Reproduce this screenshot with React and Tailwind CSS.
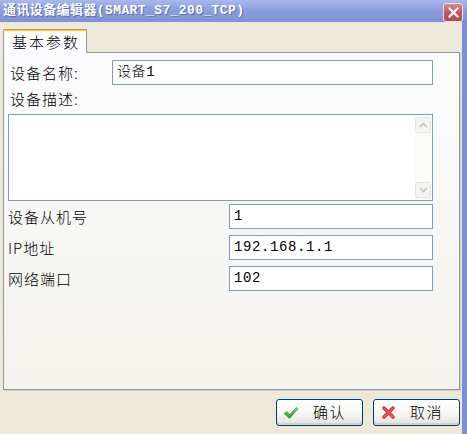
import React from "react";

const CJK = { fontFamily: '"Noto Sans CJK SC", "Noto Sans", sans-serif' };
const MONO = { fontFamily: '"Liberation Mono", "Noto Sans CJK SC", monospace' };

function Field({ value, className = "" }) {
  return (
    <div
      className={`h-[25px] border border-[#7f9db9] bg-white flex items-center pl-[4px] text-[14px] font-light tracking-[0.6px] text-black ${className}`}
      style={MONO}
    >
      {value}
    </div>
  );
}

function Label({ children, className = "" }) {
  return (
    <div className={`text-[15px] font-light tracking-[1px] text-black leading-[20px] ${className}`} style={CJK}>
      {children}
    </div>
  );
}

function Chevron({ up }) {
  return (
    <svg width="9" height="6" viewBox="0 0 9 6">
      <path
        d={up ? "M1 5 L4.5 1.5 L8 5" : "M1 1 L4.5 4.5 L8 1"}
        fill="none"
        stroke="#c4c4c4"
        strokeWidth="1.6"
      />
    </svg>
  );
}

function Btn({ icon, label }) {
  return (
    <div className="w-[87px] h-[27px] rounded-[3px] border border-[#003c74] bg-gradient-to-b from-[#ffffff] via-[#f7f7f4] to-[#e3e2da] flex items-center shadow-[inset_0_-2px_0_#d6d0c5]">
      <div className="ml-[6px] w-[16px] h-[16px] flex items-center justify-center">{icon}</div>
      <div className="ml-[14px] text-[15px] font-light tracking-[1.5px] text-black" style={CJK}>
        {label}
      </div>
    </div>
  );
}

const CheckIcon = (
  <svg width="16" height="14" viewBox="0 0 16 14">
    <defs>
      <linearGradient id="gck" x1="0" y1="0" x2="0" y2="1">
        <stop offset="0" stopColor="#8ad27a" />
        <stop offset="1" stopColor="#2f8f2f" />
      </linearGradient>
    </defs>
    <path d="M1 7.5 L4 5.5 L6.5 8.5 L13.5 1.5 L15 3 L6.5 12.5 Z" fill="url(#gck)" stroke="#3c8a3c" strokeWidth="0.6" />
  </svg>
);

const CrossIcon = (
  <svg width="15" height="15" viewBox="0 0 15 15">
    <path d="M3 3 L12 12 M12 3 L3 12" stroke="#d63a3a" strokeWidth="3.6" strokeLinecap="round" />
    <path d="M3 3 L12 12 M12 3 L3 12" stroke="#ee7070" strokeWidth="1.2" strokeLinecap="round" opacity="0.6" />
  </svg>
);

export default function App() {
  return (
    <div className="w-[467px] h-[434px] bg-[#ece9d8] flex flex-col overflow-hidden">
      {/* Title bar */}
      <div className="h-[22px] bg-gradient-to-b from-[#a9b8ec] via-[#8a9cdc] to-[#7d92d6] flex items-center pl-[3px]">
        <div
          className="text-[13px] font-bold tracking-[0.4px] text-white [text-shadow:1px_1px_0_#5a6eb4]"
          style={MONO}
        >
          通讯设备编辑器(SMART_S7_200_TCP)
        </div>
        <div className="ml-auto mr-[4px] mt-[2px] w-[20px] h-[19px] rounded-[3px] border border-[#f2e0e0] bg-gradient-to-b from-[#d98a8c] via-[#c0585e] to-[#b04a50] flex items-center justify-center">
          <svg width="11" height="11" viewBox="0 0 11 11">
            <path d="M1.5 1.5 L9.5 9.5 M9.5 1.5 L1.5 9.5" stroke="white" strokeWidth="2.2" strokeLinecap="square" />
          </svg>
        </div>
      </div>

      <div className="flex-1 flex">
        <div className="flex-1 flex flex-col pl-[3px] pr-[2px] pt-[7px]">
          {/* Tab */}
          <div className="relative z-10 w-[84px] h-[24px] -mb-[1px] bg-[#fcfcfe] border-x border-[#919b9c] rounded-t-[3px] flex flex-col">
            <div className="h-[2px] bg-[#e68b2c] rounded-t-[2px] -mx-[1px]" />
            <div className="h-[1px] bg-[#ffc73c]" />
            <div className="flex-1 flex items-center pl-[8px] text-[15px] font-light tracking-[2px] text-black" style={CJK}>
              基本参数
            </div>
          </div>

          {/* Panel */}
          <div className="h-[338px] border border-[#919b9c] shadow-[1px_1px_0_#d0cfc4] bg-gradient-to-b from-[#fcfcfe] to-[#f3f2ec] flex flex-col pl-[4px] pr-[26px] pt-[7px]">
            <div className="flex items-center h-[25px]">
              <Label className="w-[104px] pl-[2px]">设备名称:</Label>
              <Field value="设备1" className="flex-1" />
            </div>
            <Label className="mt-[3px] h-[22px] leading-[22px] pl-[2px]">设备描述:</Label>
            <div className="mt-[4px] h-[87px] border border-[#7f9db9] bg-white flex">
              <div className="flex-1" />
              <div className="w-[17px] flex flex-col py-[2px] pr-[1px] bg-[#fbfbf9]">
                <div className="h-[16px] rounded-[2px] border border-[#e6e6e0] bg-[#f4f4f0] flex items-center justify-center">
                  <Chevron up />
                </div>
                <div className="flex-1" />
                <div className="h-[16px] rounded-[2px] border border-[#e6e6e0] bg-[#f4f4f0] flex items-center justify-center">
                  <Chevron />
                </div>
              </div>
            </div>
            <div className="mt-[3px] flex flex-col gap-[6px]">
              <div className="flex items-center h-[25px]">
                <Label className="w-[221px]">设备从机号</Label>
                <Field value="1" className="flex-1" />
              </div>
              <div className="flex items-center h-[25px]">
                <Label className="w-[221px]">IP地址</Label>
                <Field value="192.168.1.1" className="flex-1" />
              </div>
              <div className="flex items-center h-[25px]">
                <Label className="w-[221px]">网络端口</Label>
                <Field value="102" className="flex-1" />
              </div>
            </div>
          </div>

          {/* Buttons */}
          <div className="mt-[9px] flex justify-end gap-[10px]">
            <Btn icon={CheckIcon} label="确认" />
            <Btn icon={CrossIcon} label="取消" />
          </div>
        </div>
        <div className="w-[5px] bg-[#7b8fd6]" />
      </div>
    </div>
  );
}
